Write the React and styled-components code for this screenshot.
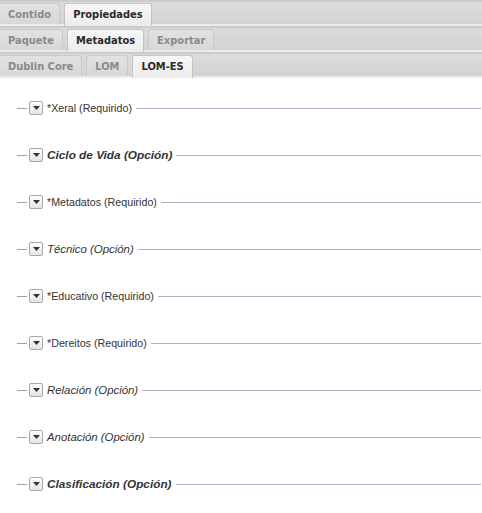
import React from "react";
import styled, { createGlobalStyle } from "styled-components";

const GlobalStyle = createGlobalStyle`
  html, body {
    margin: 0;
    padding: 0;
    background: #ffffff;
  }
`;

const levels = [
  { tabs: ["Contido", "Propiedades"], active: 1 },
  { tabs: ["Paquete", "Metadatos", "Exportar"], active: 1 },
  { tabs: ["Dublin Core", "LOM", "LOM-ES"], active: 2 },
];

const sections = [
  { label: "*Xeral (Requirido)", kind: "required" },
  { label: "Ciclo de Vida (Opción)", kind: "strong" },
  { label: "*Metadatos (Requirido)", kind: "required" },
  { label: "Técnico (Opción)", kind: "optional" },
  { label: "*Educativo (Requirido)", kind: "required" },
  { label: "*Dereitos (Requirido)", kind: "required" },
  { label: "Relación (Opción)", kind: "optional" },
  { label: "Anotación (Opción)", kind: "optional" },
  { label: "Clasificación (Opción)", kind: "strong" },
];

const labelSizes = { required: "10.7px", optional: "11.4px", strong: "11.8px" };

const Page = styled.div`
  width: 482px;
  min-height: 513px;
  background: #fff;
`;

const TabBar = styled.div`
  display: flex;
  align-items: flex-end;
  gap: 4px;
  height: 22px;
  border-top: 2px solid #cbcbcb;
  border-bottom: 2px solid #ebebeb;
  background: linear-gradient(#dcdcdc, #d3d3d3);
`;

const Tab = styled.div`
  display: flex;
  align-items: center;
  box-sizing: border-box;
  height: ${(p) => (p.$active ? "23px" : "21px")};
  margin-bottom: ${(p) => (p.$active ? "-2px" : "0")};
  padding: 0 8px ${(p) => (p.$active ? "2px" : "0")};
  border: 1px solid ${(p) => (p.$active ? "#c4c4c4" : "#c9c9c9")};
  border-bottom: none;
  border-radius: 3px 3px 0 0;
  background: ${(p) =>
    p.$active
      ? "linear-gradient(#f7f7f7, #ececec)"
      : "linear-gradient(#e2e2e2, #d8d8d8)"};
  color: ${(p) => (p.$active ? "#2a2a2a" : "#8a8a8a")};
  font-family: "DejaVu Sans Condensed", "DejaVu Sans", sans-serif;
  font-weight: bold;
  font-size: 11px;
  &:first-child {
    border-left: none;
    border-top-left-radius: 0;
  }
`;

const Content = styled.div`
  display: flex;
  flex-direction: column;
  gap: 33px;
  padding: 23px 1px 0 17px;
`;

const Legend = styled.div`
  display: flex;
  align-items: center;
  height: 14px;
`;

const Rule = styled.div`
  height: 1px;
  background: ${(p) => (p.$short ? "#a4a4a4" : "#b3b0c6")};
  ${(p) => (p.$short ? "width: 10px;" : "flex: 1;")}
`;

const Toggle = styled.div`
  display: flex;
  align-items: center;
  justify-content: center;
  box-sizing: border-box;
  width: 14px;
  height: 14px;
  margin: 0 4px 0 2px;
  border: 1px solid #a7a7a7;
  border-radius: 2px;
  background: linear-gradient(#ffffff, #e4e4e4);
`;

const Label = styled.span`
  margin-right: 4px;
  font-family: "Liberation Sans", Arial, sans-serif;
  font-size: ${(p) => labelSizes[p.$kind]};
  color: #333;
  font-style: ${(p) => (p.$kind === "required" ? "normal" : "italic")};
  font-weight: ${(p) => (p.$kind === "strong" ? "bold" : "normal")};
  white-space: nowrap;
`;

const Arrow = () => (
  <svg width="7" height="4" viewBox="0 0 7 4">
    <path d="M0 0 H7 L3.5 4 Z" fill="#333" />
  </svg>
);

export default function App() {
  return (
    <Page>
      <GlobalStyle />
      {levels.map((level, i) => (
        <TabBar key={i}>
          {level.tabs.map((t, j) => (
            <Tab key={t} $active={j === level.active}>
              {t}
            </Tab>
          ))}
        </TabBar>
      ))}
      <Content>
        {sections.map((s) => (
          <Legend key={s.label}>
            <Rule $short />
            <Toggle>
              <Arrow />
            </Toggle>
            <Label $kind={s.kind}>{s.label}</Label>
            <Rule />
          </Legend>
        ))}
      </Content>
    </Page>
  );
}
